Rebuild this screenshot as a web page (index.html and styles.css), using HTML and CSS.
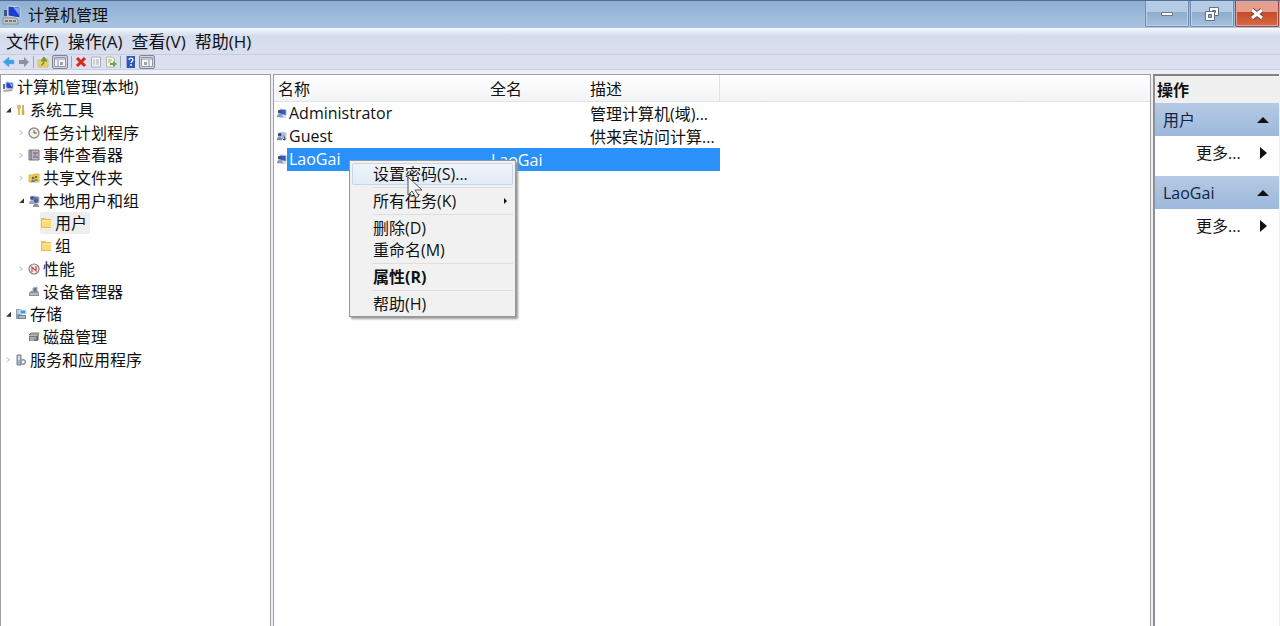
FILE: index.html
```html
<!DOCTYPE html>
<html lang="zh-CN">
  <head>
    <meta charset="utf-8">
    <title>计算机管理</title>
    <link rel="stylesheet" href="styles.css">
  </head>
  <body>
    <!-- shared icons -->
    <svg class="defs" aria-hidden="true">
      <symbol id="i-pc" viewBox="0 0 12 12">
        <path d="M4 1l7 1v6l-7-1z" fill="#2347c5" stroke="#aebbd6"/>
        <path d="M7 2l3 4V3z" fill="#8fb4f5"/>
        <path d="M1 3h2v5H1z" fill="#596b91"/>
        <path d="M1 9l8-1 2 2-9 1z" fill="#a5a9b5"/>
      </symbol>
      <symbol id="i-user" viewBox="0 0 12 12">
        <path d="M5 1l6 1v6l-6-1z" fill="#3557c8" stroke="#b4c1dd"/>
        <circle cx="4" cy="4" r="2" fill="#3b4a6e"/>
        <path d="M1 10c0-5 6-5 7 0z" fill="#7f9bd0"/>
        <path d="M5 10h6" stroke="#a9b3c8"/>
      </symbol>
      <symbol id="i-guest" viewBox="0 0 12 12">
        <path d="M5 1l6 1v6l-6-1z" fill="#a8b8dd" stroke="#ccd5e6"/>
        <circle cx="4" cy="4" r="2" fill="#3b4a6e"/>
        <path d="M1 10c0-5 5-5 6 0z" fill="#7587b0"/>
        <path d="M9 6v4M7 8l2 2 2-2" stroke="#222d4c" fill="none"/>
      </symbol>
      <symbol id="i-users" viewBox="0 0 12 12">
        <path d="M5 1l6 1v6l-6-1z" fill="#5876c8" stroke="#b4c1dd"/>
        <circle cx="4" cy="3" r="2" fill="#4b5879"/>
        <path d="M1 9c0-5 5-5 6 0z" fill="#97a7c8"/>
        <circle cx="8" cy="6" r="2" fill="#59606d"/>
        <path d="M5 12c0-5 6-5 6 0z" fill="#8794a4"/>
      </symbol>
      <symbol id="i-tools" viewBox="0 0 12 12">
        <path d="M3 1v3l1 1v6M5 1v3L4 5" stroke="#d6ab2e" stroke-width="1.5" fill="none"/>
        <path d="M8 1v6" stroke="#9d9d95" stroke-width="1.5"/>
        <path d="M8 6v5" stroke="#dcae2c" stroke-width="2.5"/>
      </symbol>
      <symbol id="i-clock" viewBox="0 0 12 12">
        <circle cx="6" cy="6" r="5" fill="#f3f2e3" stroke="#8b8b80" stroke-width="1.3"/>
        <path d="M6 3v3h3" stroke="#555" fill="none"/>
      </symbol>
      <symbol id="i-event" viewBox="0 0 12 12">
        <path d="M1 1h10v10H1z" fill="#b9b5c4" stroke="#777684"/>
        <path d="M3 1v10M5 4h5M5 8h5" stroke="#65657a"/>
        <path d="M7 3v4" stroke="#bd6874" stroke-width="1.5"/>
      </symbol>
      <symbol id="i-share" viewBox="0 0 12 12">
        <path d="M1 3h4l1-1h5v8H1z" fill="#f0cd5b" stroke="#d9b855"/>
        <circle cx="5" cy="6" r="1.3" fill="#79642e"/>
        <path d="M3 10c0-3 4-3 4 0z" fill="#637aa8"/>
        <circle cx="8" cy="5" r="1.2" fill="#79642e"/>
        <path d="M6 9c0-3 4-3 4 0z" fill="#8e9a55"/>
      </symbol>
      <symbol id="i-folder" viewBox="0 0 12 12">
        <path d="M1 1h4l1 1h5v9H1z" fill="#e8bd50"/>
        <path d="M2 3h9v7H2z" fill="#fbdc79"/>
        <path d="M2 4h8" stroke="#fdedb4"/>
      </symbol>
      <symbol id="i-perf" viewBox="0 0 12 12">
        <circle cx="6" cy="6" r="5" fill="#f6eeee" stroke="#96777a" stroke-width="1.2"/>
        <path d="M4 9V4l4 4V3" stroke="#b8444d" stroke-width="1.1" fill="none"/>
      </symbol>
      <symbol id="i-device" viewBox="0 0 12 12">
        <path d="M5 2l4-1v5H5z" fill="#64748e" stroke="#a5afbd"/>
        <path d="M1 7l2-2h7l1 2v3H1z" fill="#8b8f96"/>
        <path d="M2 8h8" stroke="#e2e4e7"/>
      </symbol>
      <symbol id="i-storage" viewBox="0 0 12 12">
        <path d="M1 1h5l1 1v9H1z" fill="#8fa0b1"/>
        <path d="M2 3h4M2 5h4" stroke="#eef3f7"/>
        <path d="M5 2h6v4H5z" fill="#4a9cd8" stroke="#dcebf5"/>
        <path d="M3 7h8v4H3z" fill="#6e8395"/>
        <path d="M4 9h6" stroke="#e7eef2"/>
      </symbol>
      <symbol id="i-disk" viewBox="0 0 12 12">
        <path d="M1 4l2-2h8l-1 2z" fill="#c0c0c0" stroke="#777"/>
        <path d="M1 5h9v5H1z" fill="#777b7d"/>
        <path d="M2 7h6M2 9h4" stroke="#d5d7d8"/>
        <path d="M10 4v5" stroke="#555"/>
      </symbol>
      <symbol id="i-service" viewBox="0 0 12 12">
        <path d="M2 1h4v10H2z" fill="#aab5c1" stroke="#73818f"/>
        <path d="M3 3h2M3 5h2" stroke="#fff"/>
        <circle cx="8" cy="8" r="2.3" fill="none" stroke="#8395a7" stroke-width="1.4"/>
      </symbol>
    </svg>

    <header class="titlebar">
      <svg class="app-icon" viewBox="0 0 20 20" aria-hidden="true">
        <path d="M6 1l12 1v11L6 11z" fill="#1c3fcb" stroke="#d3dceb"/>
        <path d="M11 2l6 8V3z" fill="#7aa5f3"/>
        <path d="M2 5h3v6H2z" fill="#3c5585"/>
        <path d="M1 13h13l2 2v4H1z" fill="#c4c7c0" stroke="#8b9296"/>
        <path d="M3 16h3M7 16h3M11 16h3" stroke="#727a7e" stroke-width="2"/>
      </svg>
      <h1>计算机管理</h1>
      <div class="window-buttons">
        <button type="button" aria-label="最小化">
          <svg viewBox="0 0 16 16"><path d="M2.500 6.500h11v3h-11z" fill="#fff" stroke="#667990"/></svg>
        </button>
        <button type="button" aria-label="还原">
          <svg viewBox="0 0 16 16">
            <path d="M5.500 1.500h9v8h-9z" fill="#fff" stroke="#5f7187"/>
            <path d="M8.500 4.500h3v2h-3z" fill="#90abc9" stroke="#5f7187"/>
            <path d="M1.500 5.500h9v9h-9z" fill="#fff" stroke="#5f7187"/>
            <path d="M4.500 8.500h3v3h-3z" fill="#90abc9" stroke="#5f7187"/>
          </svg>
        </button>
        <button type="button" class="close" aria-label="关闭">
          <svg viewBox="0 0 16 16">
            <path d="M3 4l10 8M13 4L3 12" stroke="#7a4038" stroke-width="5"/>
            <path d="M3 4l10 8M13 4L3 12" stroke="#fff" stroke-width="3"/>
          </svg>
        </button>
      </div>
    </header>

    <nav class="menubar">
      <button type="button">文件(F)</button>
      <button type="button">操作(A)</button>
      <button type="button">查看(V)</button>
      <button type="button">帮助(H)</button>
    </nav>

    <div class="toolbar">
      <button type="button" aria-label="后退">
        <svg viewBox="0 0 12 12"><path d="M0 6l6-5v3h5v4H6v3z" fill="#3b9fe3" stroke="#6fb6e8" stroke-width=".5"/></svg>
      </button>
      <button type="button" aria-label="前进">
        <svg viewBox="0 0 12 12"><path d="M11 6L6 1v3H1v4h5v3z" fill="#8b919d"/></svg>
      </button>
      <span class="divider"></span>
      <button type="button" aria-label="向上">
        <svg viewBox="0 0 12 12">
          <path d="M1 4h4l1-1h5v8H1z" fill="#ead064" stroke="#d6c07a"/>
          <path d="M4 9c3 0 3-2 3-4M4 5l3-4 3 4z" fill="#74973a" stroke="#74973a"/>
        </svg>
      </button>
      <button type="button" class="on" aria-label="显示/隐藏控制台树">
        <svg viewBox="0 0 12 12">
          <path d="M.5 1.500h11v9H.5z" fill="#f4f5f8" stroke="#9499a6"/>
          <path d="M1 3h10M4 4v6" stroke="#8b91a0"/>
          <path d="M6 6h3v3H6z" fill="#9fa3ab"/>
        </svg>
      </button>
      <span class="divider"></span>
      <button type="button" aria-label="删除">
        <svg viewBox="0 0 12 12"><path d="M2 2l8 8M10 2l-8 8" stroke="#d9291c" stroke-width="3"/></svg>
      </button>
      <button type="button" aria-label="属性">
        <svg viewBox="0 0 12 12">
          <path d="M1.500 1h9v10h-9z" fill="#f3f4f8" stroke="#a9afbd"/>
          <path d="M3 4h2M6 4h3M3 6h2M6 6h3M3 8h2M6 8h3" stroke="#a4abb9"/>
        </svg>
      </button>
      <button type="button" aria-label="导出列表">
        <svg viewBox="0 0 12 12">
          <path d="M1.500 1h6l2 2v8h-8z" fill="#f8f7e2" stroke="#b7b89f"/>
          <path d="M3 4h4M3 6h3" stroke="#aaa98d"/>
          <path d="M5 7h3V5l4 3-4 3V9H5z" fill="#58ae43"/>
        </svg>
      </button>
      <span class="divider"></span>
      <button type="button" aria-label="帮助">
        <svg viewBox="0 0 12 12">
          <path d="M2 0h9v12H2z" fill="#2f57b5"/>
          <path d="M2 0h1v12H2z" fill="#94abd9"/>
          <path d="M5 4c0-3 4-2 4 0 0 1-2 1-2 3M7 8v2" stroke="#fff" stroke-width="1.3" fill="none"/>
        </svg>
      </button>
      <button type="button" class="on" aria-label="显示/隐藏操作窗格">
        <svg viewBox="0 0 12 12">
          <path d="M.5 1.500h11v9H.5z" fill="#f4f5f8" stroke="#9499a6"/>
          <path d="M1 3h10M8 4v6" stroke="#8b91a0"/>
          <path d="M3 6h3v3H3z" fill="#9fa3ab"/>
        </svg>
      </button>
    </div>

    <main>
      <nav class="pane tree">
        <ul>
          <li><svg><use href="#i-pc"/></svg><span>计算机管理(本地)</span></li>
          <li class="l1 open"><svg><use href="#i-tools"/></svg><span>系统工具</span></li>
          <li class="l2 shut"><svg><use href="#i-clock"/></svg><span>任务计划程序</span></li>
          <li class="l2 shut"><svg><use href="#i-event"/></svg><span>事件查看器</span></li>
          <li class="l2 shut"><svg><use href="#i-share"/></svg><span>共享文件夹</span></li>
          <li class="l2 open"><svg><use href="#i-users"/></svg><span>本地用户和组</span></li>
          <li class="l3 current"><svg><use href="#i-folder"/></svg><span>用户</span></li>
          <li class="l3"><svg><use href="#i-folder"/></svg><span>组</span></li>
          <li class="l2 shut"><svg><use href="#i-perf"/></svg><span>性能</span></li>
          <li class="l2"><svg><use href="#i-device"/></svg><span>设备管理器</span></li>
          <li class="l1 open"><svg><use href="#i-storage"/></svg><span>存储</span></li>
          <li class="l2"><svg><use href="#i-disk"/></svg><span>磁盘管理</span></li>
          <li class="l1 shut"><svg><use href="#i-service"/></svg><span>服务和应用程序</span></li>
        </ul>
      </nav>

      <section class="pane list">
        <table>
          <thead>
            <tr>
              <th class="name">名称</th>
              <th class="full">全名</th>
              <th class="desc">描述</th>
              <th></th>
            </tr>
          </thead>
          <tbody>
            <tr>
              <td class="name"><div><svg><use href="#i-user"/></svg><span>Administrator</span></div></td>
              <td></td>
              <td>管理计算机(域)...</td>
              <td></td>
            </tr>
            <tr>
              <td class="name"><div><svg><use href="#i-guest"/></svg><span>Guest</span></div></td>
              <td></td>
              <td>供来宾访问计算...</td>
              <td></td>
            </tr>
            <tr class="selected">
              <td class="name"><div><svg><use href="#i-user"/></svg><span>LaoGai</span></div></td>
              <td>LaoGai</td>
              <td></td>
              <td></td>
            </tr>
          </tbody>
        </table>

        <div class="context-menu">
          <button type="button" class="hover">设置密码(S)...</button>
          <hr>
          <button type="button" class="sub">所有任务(K)</button>
          <hr>
          <button type="button">删除(D)</button>
          <button type="button">重命名(M)</button>
          <hr>
          <button type="button" class="default">属性(R)</button>
          <hr>
          <button type="button">帮助(H)</button>
        </div>
        <svg class="cursor" viewBox="0 0 16 24" aria-hidden="true">
          <path d="M1 1v18l4-4 4 7 3-2-4-6h7z" fill="#f5f5f5" stroke="#555"/>
        </svg>
      </section>

      <aside class="pane actions">
        <h2>操作</h2>
        <button type="button" class="group">用户 <i></i></button>
        <button type="button" class="more">更多... <i></i></button>
        <button type="button" class="group">LaoGai <i></i></button>
        <button type="button" class="more">更多... <i></i></button>
      </aside>
    </main>
  </body>
</html>
```

FILE: styles.css
```css
* {
  box-sizing: border-box;
}

body {
  display: flex;
  flex-direction: column;
  min-height: 100vh;
  margin: 0;
  color: #111;
  background: #eceef8;
  font-family: "Open Sans", "Noto Sans CJK SC", sans-serif;
  font-size: 16px;
  line-height: 22px;
}

button {
  padding: 0;
  border: 0;
  color: inherit;
  background: none;
  font: inherit;
}

svg {
  display: block;
  flex: none;
}

.defs {
  position: absolute;
  width: 0;
  height: 0;
}

/* title bar */
.titlebar {
  display: flex;
  align-items: center;
  height: 28px;
  padding-left: 2px;
  border-top: 1px solid #4c6e98;
  background: linear-gradient(#8fafd2, #a9c4e1);
}

.app-icon {
  width: 20px;
  height: 20px;
}

.titlebar h1 {
  flex: 1;
  margin: 0 0 0 6px;
  font-size: 16px;
  font-weight: normal;
}

.window-buttons {
  display: flex;
  align-self: flex-start;
  gap: 1px;
  padding-right: 1px;
}

.window-buttons button {
  display: flex;
  align-items: center;
  justify-content: center;
  width: 44px;
  height: 26px;
  border: 1px solid #6f8dae;
  border-top: 0;
  border-radius: 0 0 2px 2px;
  background: linear-gradient(#b4cbe3 45%, #8facca 45%, #a5c1de);
  box-shadow: inset 0 0 0 1px #bdd1e6;
}

.window-buttons .close {
  border-color: #8f4a45;
  background: linear-gradient(#e69f8d 45%, #c64b2b 45%, #d66a45);
  box-shadow: inset 0 0 0 1px #e5a493;
}

.window-buttons svg {
  width: 16px;
  height: 16px;
}

/* menu and toolbar */
.menubar {
  display: flex;
  gap: 9px;
  height: 27px;
  padding: 2px 6px 0;
  border-bottom: 1px solid #c7cde0;
  background: linear-gradient(#f7f9fd, #d3dbec 8px, #dadff0);
  font-size: 17px;
}

.toolbar {
  display: flex;
  align-items: center;
  gap: 3px;
  height: 15px;
  padding-left: 3px;
  border-bottom: 1px solid #c9cde0;
  background: #dcdff0;
}

.toolbar svg {
  width: 12px;
  height: 12px;
}

.toolbar .on {
  padding: 0 1px;
  border: 1px solid #7c8496;
  border-radius: 2px;
  background: #d0d3df;
}

.toolbar .divider {
  width: 1px;
  height: 12px;
  background: #a3a8b8;
}

/* panes */
main {
  display: flex;
  flex: 1;
  gap: 2px;
  padding: 4px 1px 0 0;
}

.pane {
  border: 1px solid #a0a0a5;
  border-bottom: 0;
  background: #fff;
}

.tree {
  width: 271px;
}

.tree ul {
  display: grid;
  grid-template-rows: repeat(13, 1fr);
  height: 296px;
  margin: 0;
  padding: 1px 0 0 1px;
  list-style: none;
}

.tree li {
  display: flex;
  align-items: center;
  white-space: nowrap;
}

.tree svg {
  width: 12px;
  height: 12px;
  margin-right: 3px;
}

.tree .l1 { padding-left: 13px; }
.tree .l2 { padding-left: 26px; }
.tree .l3 { padding-left: 38px; }

.tree .open::before,
.tree .shut::before {
  content: "";
  width: 5px;
  height: 5px;
  margin: 0 4px 0 -9px;
}

.tree .open::before {
  background: #333;
  clip-path: polygon(100% 0, 100% 100%, 0 100%);
}

.tree .shut::before {
  background: #bbb;
  clip-path: polygon(0 0, 20% 0, 80% 50%, 20% 100%, 0 100%, 50% 50%);
}

.tree .current span {
  margin-left: -15px;
  padding: 0 3px 0 15px;
  border-radius: 2px;
  background: #eee;
}

.tree .current svg {
  z-index: 1;
}

.list {
  position: relative;
  flex: 1;
}

.list table {
  width: 100%;
  table-layout: fixed;
  border-collapse: separate;
  border-spacing: 0;
}

.list th {
  height: 27px;
  padding: 2px 4px 0;
  border-bottom: 1px solid #e0e2e5;
  background: linear-gradient(#fff, #f3f4f6);
  font-weight: normal;
  text-align: left;
}

.list th.name { width: 212px; }
.list th.full { width: 99px; }

.list th.desc {
  width: 135px;
  padding-left: 5px;
  border-right: 1px solid #e0e2e5;
}

.list td {
  height: 23px;
  padding: 0 5px;
  white-space: nowrap;
}

.list td.name {
  padding: 0 0 0 2px;
}

.list td div {
  display: flex;
  align-items: center;
}

.list td svg {
  width: 11px;
  height: 11px;
}

.list td span {
  flex: 1;
  padding-left: 2px;
  line-height: 23px;
}

.selected span,
.selected td:not(.name):not(:last-child) {
  color: #fff;
  background: #2a91fb;
}

/* popup menu over the list */
.context-menu {
  position: absolute;
  top: 85px;
  left: 75px;
  display: flex;
  flex-direction: column;
  width: 167px;
  padding: 2px 2px 1px;
  border: 1px solid #979797;
  background: #f1f1f1;
  box-shadow: 2px 2px 2px #999;
}

.context-menu button {
  height: 22px;
  padding-left: 21px;
  text-align: left;
}

.context-menu .hover {
  border-radius: 2px;
  background: linear-gradient(#f0f4fa, #e3ebf6);
  box-shadow: inset 0 0 0 1px #c5d7ec;
}

.context-menu .sub {
  display: flex;
  align-items: center;
  justify-content: space-between;
  padding-right: 6px;
}

.context-menu .sub::after {
  content: "";
  border: 3px solid transparent;
  border-right: 0;
  border-left-color: #111;
}

.context-menu .default {
  font-weight: bold;
}

.context-menu hr {
  width: 141px;
  height: 1px;
  margin: 2px 0 2px auto;
  border: 0;
  background: #dedede;
}

.cursor {
  position: absolute;
  top: 101px;
  left: 133px;
  width: 16px;
  height: 24px;
}

/* actions */
.actions {
  display: flex;
  flex-direction: column;
  width: 126px;
  border-top: 2px solid #828282;
  border-left: 2px solid #909090;
  border-right: 0;
}

.actions h2 {
  height: 27px;
  margin: 0;
  padding-left: 2px;
  background: #f0f0f0;
  font-size: 16px;
  line-height: 28px;
}

.actions button {
  display: flex;
  align-items: center;
  justify-content: space-between;
}

.actions .group {
  height: 33px;
  padding: 0 10px 0 8px;
  color: #132441;
  background: linear-gradient(#b5cae4, #9cb8dc);
}

.actions .more {
  height: 33px;
  margin-bottom: 7px;
  padding: 0 12px 0 41px;
}

.actions .group i {
  border: 6px solid transparent;
  border-top: 0;
  border-bottom-color: #111;
}

.actions .more i {
  border: 6px solid transparent;
  border-right: 0;
  border-left: 7px solid #111;
}
```
